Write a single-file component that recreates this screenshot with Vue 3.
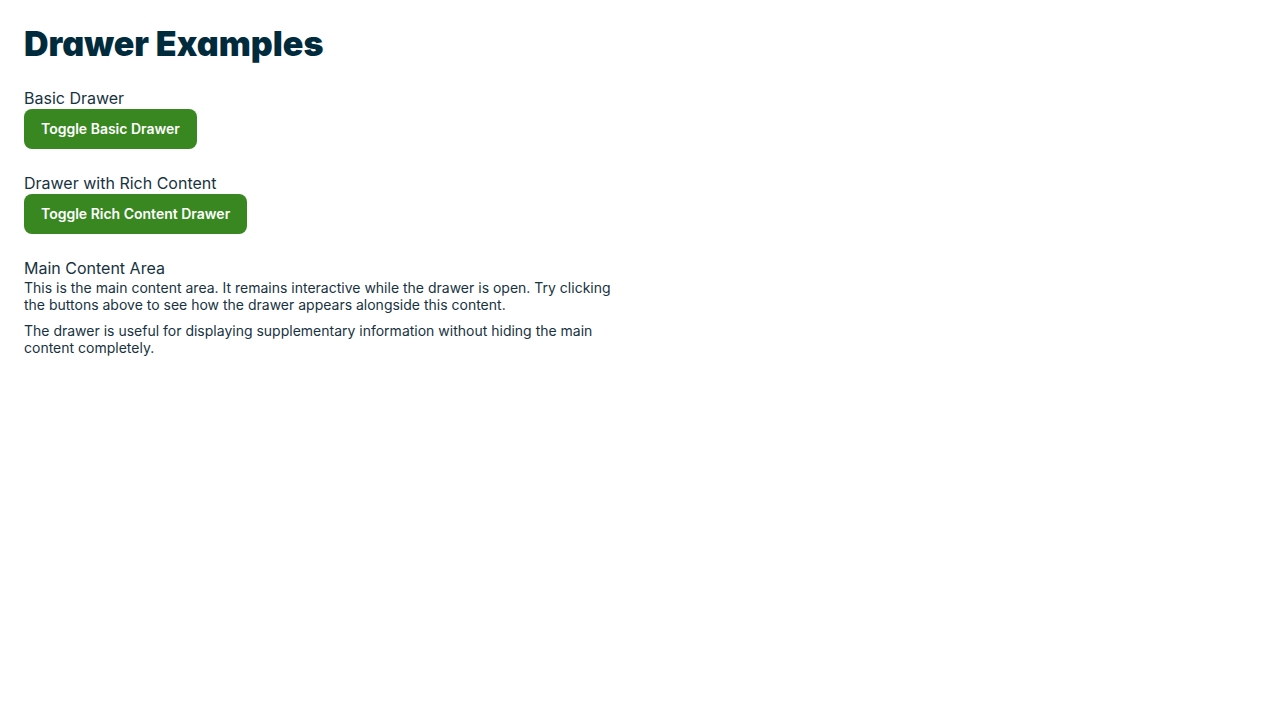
<script setup>
import { ref } from 'vue'
const open = ref('')
function toggle(name) {
  open.value = open.value === name ? '' : name
}
</script>

<template>
  <main class="page">
    <h1>Drawer Examples</h1>
    <section>
      <h2>Basic Drawer</h2>
      <button type="button" :aria-expanded="open === 'basic'" @click="toggle('basic')">Toggle Basic Drawer</button>
    </section>
    <section>
      <h2>Drawer with Rich Content</h2>
      <button type="button" :aria-expanded="open === 'rich'" @click="toggle('rich')">Toggle Rich Content Drawer</button>
    </section>
    <section>
      <h2>Main Content Area</h2>
      <p>This is the main content area. It remains interactive while the drawer is open. Try clicking the buttons above to see how the drawer appears alongside this content.</p>
      <p>The drawer is useful for displaying supplementary information without hiding the main content completely.</p>
    </section>
  </main>
</template>

<style>
body {
  margin: 0;
  background: #fff;
}
</style>

<style scoped>
.page {
  box-sizing: border-box;
  max-width: 648px;
  padding: 24px;
  color: #17333f;
  font-family: Inter, "Liberation Sans", sans-serif;
}
h1 {
  margin: 0 0 24px;
  color: #002b3d;
  font-size: 34px;
  font-weight: 900;
  font-feature-settings: "cv11";
  line-height: 40px;
}
section {
  margin-bottom: 24px;
}
h2 {
  margin: 0 0 1px;
  font-size: 16px;
  font-weight: 400;
  line-height: 20px;
}
button {
  display: block;
  height: 40px;
  padding: 0 17px 2px;
  border: 0;
  border-radius: 8px;
  background: #388720;
  color: #fff;
  font-family: inherit;
  font-size: 14px;
  font-weight: 600;
}
p {
  margin: 0 0 9px;
  font-size: 14px;
  line-height: 17px;
}
</style>
